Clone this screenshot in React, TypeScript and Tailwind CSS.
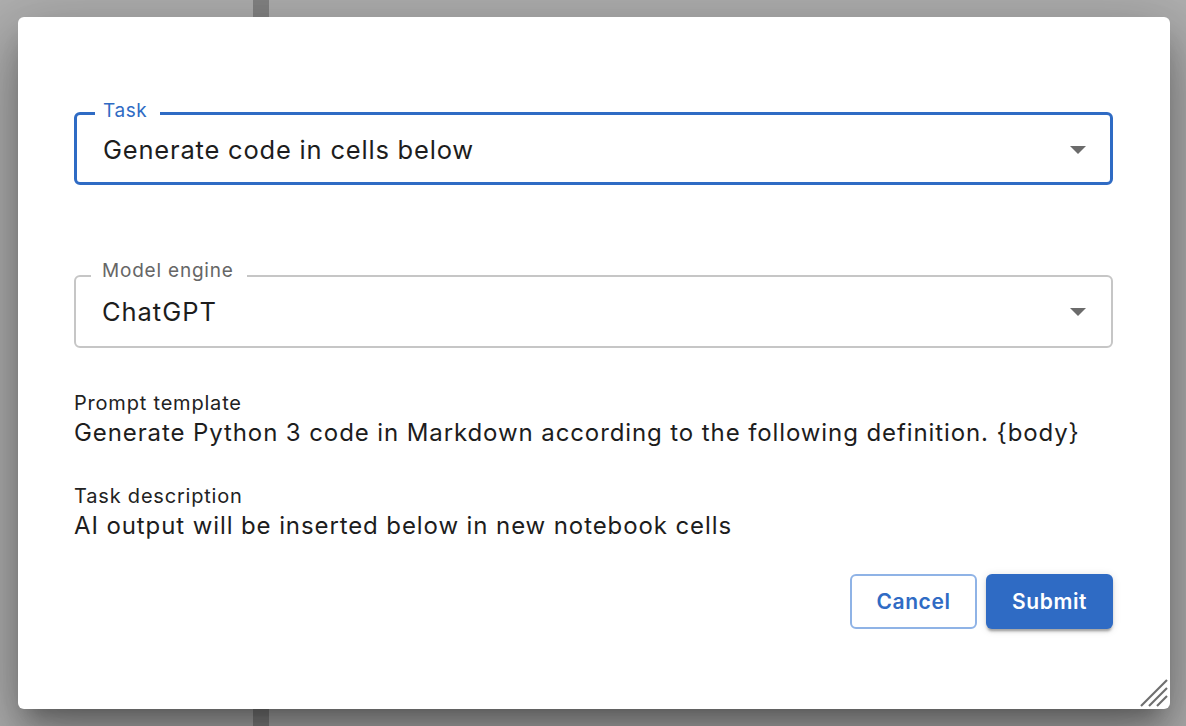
import React from 'react';

const BLUE = '#2f6bc4';

const ArrowDrop: React.FC = () => (
  <svg width="16" height="8" viewBox="0 0 16 8" className="shrink-0">
    <polygon points="0,0 16,0 8,8" fill="#6b6b6b" />
  </svg>
);

const ResizeGrip: React.FC = () => (
  <svg width="28" height="28" viewBox="0 0 28 28" className="absolute right-[2px] bottom-[2px]">
    <g stroke="#6e6e6e" strokeWidth="2.2" strokeLinecap="butt">
      <line x1="27" y1="1" x2="1" y2="27" />
      <line x1="27" y1="9" x2="9" y2="27" />
      <line x1="27" y1="17" x2="17" y2="27" />
    </g>
  </svg>
);

interface InfoProps {
  label: string;
  value: string;
}

const Info: React.FC<InfoProps> = ({ label, value }) => (
  <div className="flex flex-col">
    <div className="text-[20px] leading-[26px] tracking-[0.8px] text-[#222222]">{label}</div>
    <div className="text-[24px] leading-[33px] tracking-[0.9px] text-[#1d1d1d]">{value}</div>
  </div>
);

export default function App() {
  return (
    <div className="relative w-full h-[726px] overflow-hidden bg-[#b0b0b0] pt-[17px] pl-[18px] font-['Inter','Noto_Sans',sans-serif]">
      <div className="absolute left-[253px] top-0 w-[16px] h-full bg-black/25" />

      <div className="relative w-[1152px] h-[692px] bg-white rounded-[6px] shadow-[0_16px_22px_-10px_rgba(0,0,0,0.3),0_36px_57px_4px_rgba(0,0,0,0.2),0_14px_69px_12px_rgba(0,0,0,0.18)] pl-[56px] pr-[57px] pt-[95px] flex flex-col">
        {/* Task select (focused) */}
        <div className="relative h-[73px] border-[3px] rounded-[6px] flex items-center pl-[26px] pr-[24px] pt-[3px]" style={{ borderColor: BLUE }}>
          <span className="absolute left-[18px] top-[-14px] bg-white pl-[8px] pr-[13px] text-[19px] leading-[20px] tracking-[0.6px] text-[#2f6bc4]">
            Task
          </span>
          <span className="flex-1 text-[25.5px] leading-[32px] tracking-[0.8px] text-[#1d1d1d]">Generate code in cells below</span>
          <ArrowDrop />
        </div>

        {/* Model engine select */}
        <div className="relative mt-[90px] h-[73px] border-2 border-[#c6c6c6] rounded-[6px] flex items-center pl-[26px] pr-[25px]">
          <span className="absolute left-[15px] top-[-16px] bg-white pl-[11px] pr-[13px] text-[19px] leading-[20px] tracking-[0.8px] text-[#666666]">
            Model engine
          </span>
          <span className="flex-1 text-[25.5px] leading-[32px] tracking-[0.95px] text-[#1d1d1d]">ChatGPT</span>
          <ArrowDrop />
        </div>

        <div className="mt-[42px] flex flex-col gap-[34px]">
          <Info
            label="Prompt template"
            value="Generate Python 3 code in Markdown according to the following definition. {body}"
          />
          <Info label="Task description" value="AI output will be inserted below in new notebook cells" />
        </div>

        <div className="mt-[32px] flex justify-end gap-[9px]">
          <button className="w-[127px] h-[55px] rounded-[6px] border-2 border-[#8fb3e6] bg-white text-[21px] font-semibold tracking-[0.6px] text-[#2f6bc4]">
            Cancel
          </button>
          <button className="w-[127px] h-[55px] rounded-[6px] bg-[#2f6bc4] text-[21px] font-semibold tracking-[0.6px] text-white shadow-[0_4px_2px_-2px_rgba(0,0,0,0.2),0_3px_3px_0_rgba(0,0,0,0.14),0_1px_8px_0_rgba(0,0,0,0.12)]">
            Submit
          </button>
        </div>

        <ResizeGrip />
      </div>
    </div>
  );
}
